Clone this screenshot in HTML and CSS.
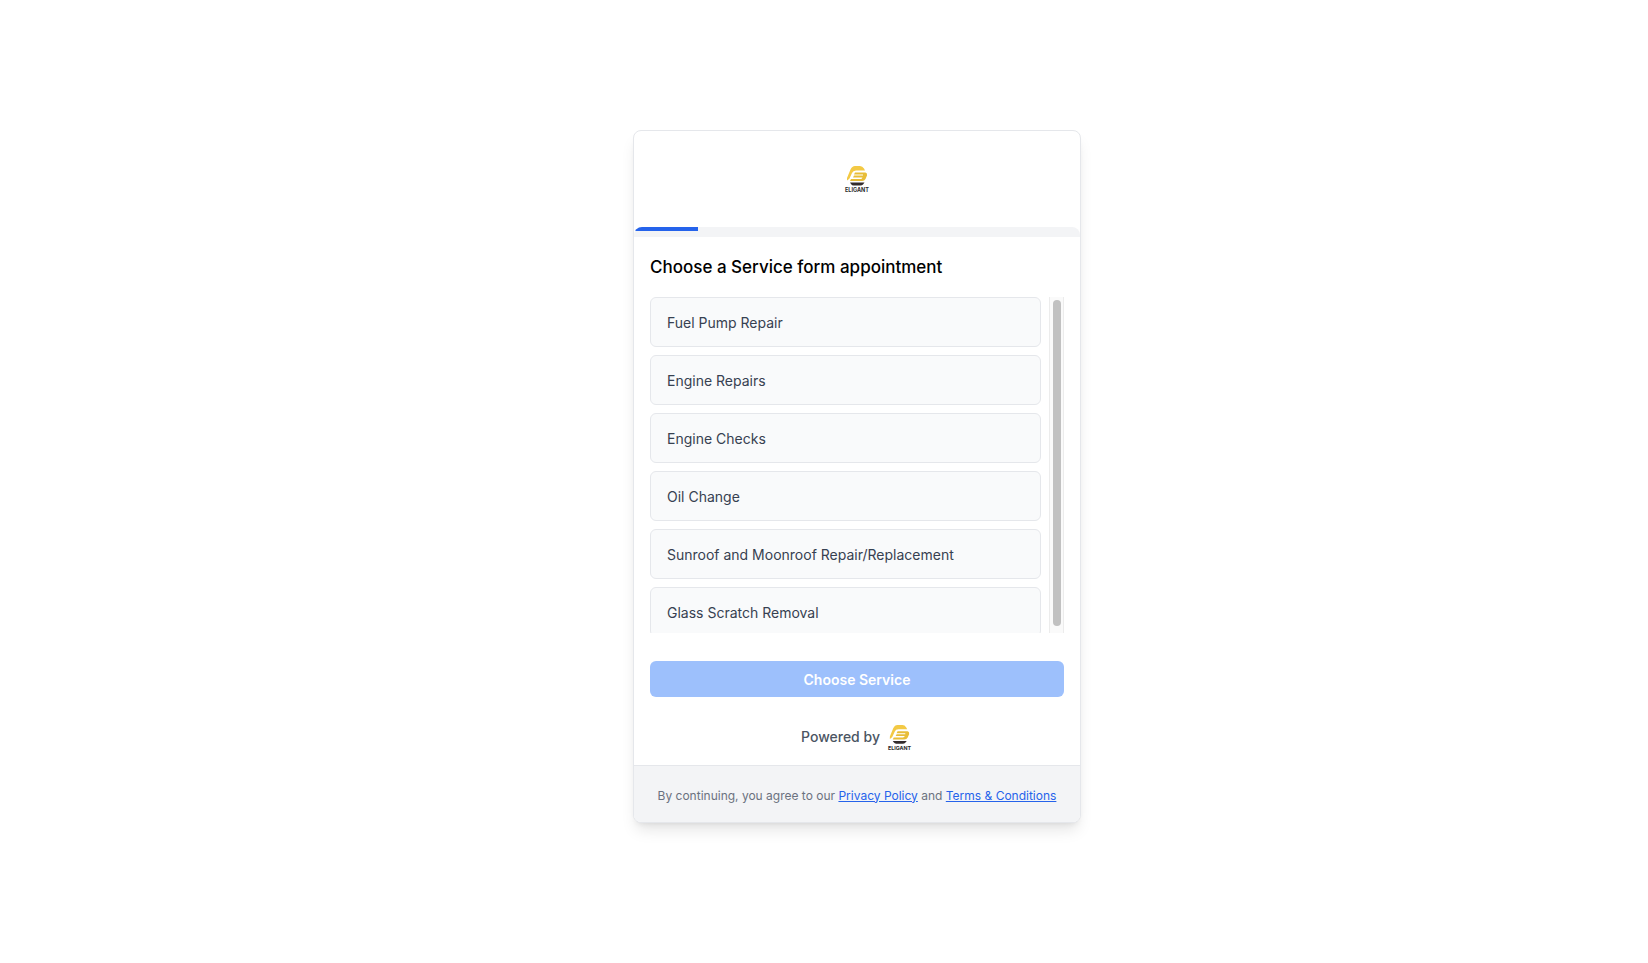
FILE: index.html
```html
<!DOCTYPE html>
<html lang="en">
<head>
<meta charset="utf-8">
<meta name="viewport" content="width=device-width, initial-scale=1">
<title>Choose a Service</title>
<link rel="stylesheet" href="styles.css">
</head>
<body>
<main class="page">
  <form class="card">
    <header class="card-header">
      <svg class="logo" viewBox="0 0 56 56" role="img" aria-label="Eligant">
        <path d="M8 26 L15 9 Q18 2 24 2 H34 Q39 2 42 7 L44 11 H26 Q20 11 18 16 L13 27 Q11 29 8 31Z" fill="#f3c944"/>
        <path d="M24 15 H45 Q49 16 48 21 L45 28 Q43 32 38 32 H14 L16 28 H35 Q38 28 39 25 H20 L22 21 H40 V19 H22Z" fill="#e8bd38"/>
        <path d="M14 35 H43 L40 39 Q38 41 35 41 H21 Q18 41 16 38Z" fill="#332c2c"/>
        <text x="28" y="54" text-anchor="middle" class="wordmark">ELIGANT</text>
      </svg>
    </header>
    <div class="progress" role="progressbar" aria-label="Booking progress" aria-valuenow="14" aria-valuemin="0" aria-valuemax="100">
      <div class="progress-bar" style="width:14.3%"></div>
    </div>
    <section class="content">
      <h1 class="title">Choose a Service form appointment</h1>
      <div class="picker">
        <div class="services">
          <button type="button" class="service">Fuel Pump Repair</button>
          <button type="button" class="service">Engine Repairs</button>
          <button type="button" class="service">Engine Checks</button>
          <button type="button" class="service">Oil Change</button>
          <button type="button" class="service">Sunroof and Moonroof Repair/Replacement</button>
          <button type="button" class="service">Glass Scratch Removal</button>
        </div>
        <div class="track" aria-hidden="true"><div class="thumb"></div></div>
      </div>
      <button type="submit" class="submit" disabled>Choose Service</button>
      <div class="powered">
        <span>Powered by</span>
        <svg class="logo logo-small" viewBox="0 0 56 56" role="img" aria-label="Eligant">
          <path d="M8 26 L15 9 Q18 2 24 2 H34 Q39 2 42 7 L44 11 H26 Q20 11 18 16 L13 27 Q11 29 8 31Z" fill="#f3c944"/>
          <path d="M24 15 H45 Q49 16 48 21 L45 28 Q43 32 38 32 H14 L16 28 H35 Q38 28 39 25 H20 L22 21 H40 V19 H22Z" fill="#e8bd38"/>
          <path d="M14 35 H43 L40 39 Q38 41 35 41 H21 Q18 41 16 38Z" fill="#332c2c"/>
          <text x="28" y="54" text-anchor="middle" class="wordmark">ELIGANT</text>
        </svg>
      </div>
    </section>
    <footer class="legal">By continuing, you agree to our <a href="#privacy">Privacy Policy</a> and <a href="#terms">Terms &amp; Conditions</a></footer>
  </form>
</main>
</body>
</html>
```
FILE: styles.css
```css
* {
  box-sizing: border-box;
}

body {
  margin: 0;
  background: #fff;
  font-family: Inter, "Liberation Sans", sans-serif;
  font-size: 14px;
  line-height: 20px;
}

.page {
  display: flex;
  align-items: center;
  justify-content: center;
  min-height: 100vh;
  padding: 0 0 11px 66px;
}

.card {
  width: 100%;
  max-width: 448px;
  overflow: hidden;
  border: 1px solid #e5e7eb;
  border-radius: 8px;
  background: #fff;
  box-shadow: 0 10px 15px -3px rgb(0 0 0 / 10%), 0 4px 6px -4px rgb(0 0 0 / 10%);
}

.card-header {
  display: flex;
  justify-content: center;
  padding: 34px 16px;
}

.logo {
  display: block;
  width: 28px;
  height: 28px;
}

.logo-small {
  width: 27px;
  height: 27px;
}

.wordmark {
  font-family: Inter, sans-serif;
  font-size: 11px;
  font-weight: 700;
  fill: #2b2b2b;
}

.progress {
  height: 10px;
  padding: 0 1px;
  overflow: hidden;
  border-radius: 8px 8px 0 0;
  background: #f3f4f6;
}

.progress-bar {
  height: 4px;
  border-top-left-radius: 8px;
  background: #2563eb;
}

.content {
  padding: 16px 16px 14px;
}

.title {
  margin: 0 0 16px;
  font-size: 17px;
  font-weight: 500;
  line-height: 28px;
  color: #000;
}

.picker {
  display: flex;
  gap: 8px;
  height: 336px;
}

.services {
  display: flex;
  flex: 1;
  flex-direction: column;
  gap: 8px;
  overflow-y: auto;
  scrollbar-width: none;
}

.service {
  flex: none;
  height: 50px;
  padding: 2px 16px 0;
  border: 1px solid #e5e7eb;
  border-radius: 6px;
  background: #f9fafb;
  color: #374151;
  font: inherit;
  text-align: left;
}

.track {
  width: 15px;
  padding: 3px 3px 7px;
  border: solid #ececec;
  border-width: 0 1px;
  background: #fafafa;
}

.thumb {
  width: 8px;
  height: 100%;
  border-radius: 4px;
  background: #c1c1c1;
}

.submit {
  display: block;
  width: 100%;
  margin-top: 28px;
  padding: 9px 16px 7px;
  border: 0;
  border-radius: 6px;
  background: #9dc0fc;
  color: #fff;
  font: inherit;
  font-weight: 600;
}

.powered {
  display: flex;
  align-items: center;
  justify-content: center;
  gap: 6px;
  margin-top: 27px;
  color: #4b5563;
  font-weight: 500;
}

.legal {
  padding: 22px 16px 18px;
  border-top: 1px solid #e5e7eb;
  background: #f3f4f6;
  color: #6b7280;
  font-size: 12px;
  line-height: 16px;
  text-align: center;
}

.legal a {
  color: #2563eb;
}
```
